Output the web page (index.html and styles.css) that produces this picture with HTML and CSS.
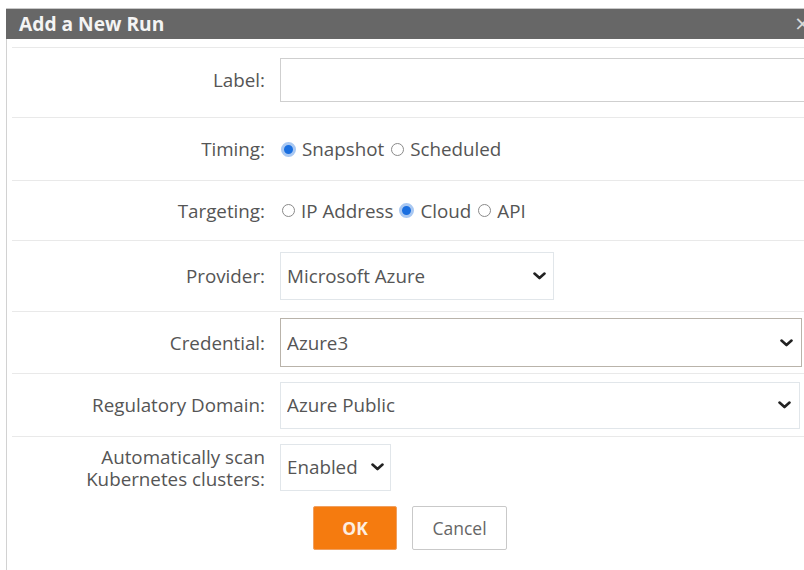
FILE: index.html
```html
<!DOCTYPE html>
<html lang="en">
<head>
<meta charset="utf-8">
<title>Add a New Run</title>
<link rel="stylesheet" href="styles.css">
</head>
<body>
<div class="dialog">
  <div class="titlebar">
    <span class="title">Add a New Run</span>
    <span class="close">&times;</span>
  </div>
  <form class="form">
    <div class="row r-label">
      <label class="lbl" for="run-label">Label:</label>
      <input id="run-label" class="text wide-input" type="text">
    </div>
    <div class="row r-timing">
      <span class="lbl">Timing:</span>
      <div class="radios">
        <label class="opt"><input type="radio" name="timing" checked> Snapshot</label>
        <label class="opt"><input type="radio" name="timing"> Scheduled</label>
      </div>
    </div>
    <div class="row r-target">
      <span class="lbl">Targeting:</span>
      <div class="radios">
        <label class="opt"><input type="radio" name="target"> IP Address</label>
        <label class="opt"><input type="radio" name="target" checked> Cloud</label>
        <label class="opt"><input type="radio" name="target"> API</label>
      </div>
    </div>
    <div class="row r-provider">
      <label class="lbl" for="provider">Provider:</label>
      <select id="provider" class="sel sel-provider"><option>Microsoft Azure</option></select>
    </div>
    <div class="row r-cred">
      <label class="lbl" for="cred">Credential:</label>
      <select id="cred" class="sel sel-full sel-active"><option>Azure3</option></select>
    </div>
    <div class="row r-domain">
      <label class="lbl" for="domain">Regulatory Domain:</label>
      <select id="domain" class="sel sel-domain"><option>Azure Public</option></select>
    </div>
    <div class="row r-kube">
      <label class="lbl lbl-two" for="kube"><span class="line">Automatically scan</span><span class="line">Kubernetes clusters:</span></label>
      <select id="kube" class="sel sel-small"><option>Enabled</option><option>Disabled</option></select>
    </div>
    <div class="actions">
      <button type="button" class="btn btn-ok">OK</button>
      <button type="button" class="btn btn-cancel">Cancel</button>
    </div>
  </form>
</div>
</body>
</html>
```

FILE: styles.css
```css
html, body {
  margin: 0;
  padding: 0;
  background: #ffffff;
  overflow: hidden;
}

body {
  font-family: "Open Sans", "Liberation Sans", sans-serif;
  font-size: 18.8px;
  color: #555555;
  width: 804px;
  height: 570px;
}

.dialog {
  margin: 8px 0 0 6px;
  width: 820px;
  height: 570px;
  border-left: 1px solid #d2d2d2;
  border-top: 1px solid #c8c8c8;
  box-sizing: border-box;
}

.titlebar {
  height: 30px;
  background: #676767;
  display: flex;
  align-items: center;
  padding: 0 0 0 13px;
  margin-left: -1px;
}

.title {
  color: #f4f4f4;
  font-weight: 700;
  font-size: 19.2px;
  line-height: 1;
  flex: 1;
}

/* the close glyph sits at the far right, partly past the viewport */
.close {
  color: #d8d8d8;
  font-size: 26px;
  line-height: 1;
  width: 31px;
  margin-top: -2px;
}

.form {
  padding-top: 8px;
}

.row {
  display: grid;
  grid-template-columns: 253px 1fr;
  column-gap: 15px;
  align-items: center;
  margin-left: 5px;
  border-top: 1px solid #e9e9e9;
}

.r-label    { height: 69px; }
.r-timing   { height: 62px; }
.r-target   { height: 59px; }
.r-provider { height: 70px; }
.r-cred     { height: 61px; }
.r-domain   { height: 62px; }
.r-kube     { height: 62px; }

.lbl {
  text-align: right;
  color: #555555;
  white-space: nowrap;
}

.lbl-two .line {
  display: block;
  line-height: 22px;
  height: 22px;
}

.r-label .lbl {
  position: relative;
  top: -3px;
}

.text {
  height: 44px;
  box-sizing: border-box;
  border: 1px solid #cfcfcf;
  font: inherit;
  padding: 0 6px;
  position: relative;
  top: -3px;
}

.wide-input {
  width: 540px;
}

.radios {
  display: flex;
  align-items: center;
  gap: 5px;
  white-space: nowrap;
}

.opt {
  display: inline-flex;
  align-items: center;
  gap: 6px;
  color: #555555;
}

.opt input {
  appearance: none;
  -webkit-appearance: none;
  margin: 0 0 0 2px;
  width: 13px;
  height: 13px;
  border-radius: 50%;
  border: 1px solid #8a8a8a;
  background: #ffffff;
  box-sizing: border-box;
}

.opt input:checked {
  margin-left: 1px;
  width: 15px;
  height: 15px;
  border: 3px solid #a9c8f2;
  background: #1a6fe0;
  box-shadow: inset 0 0 0 1px #1a6fe0;
}

.sel {
  appearance: none;
  -webkit-appearance: none;
  font: inherit;
  color: #555555;
  background-color: #ffffff;
  background-image: url("data:image/svg+xml,%3Csvg xmlns='http://www.w3.org/2000/svg' width='14' height='8' viewBox='0 0 14 8'%3E%3Cpath d='M1.6 1.4 L7 6.2 L12.4 1.4' fill='none' stroke='%23222' stroke-width='2.8' stroke-linecap='round' stroke-linejoin='round'/%3E%3C/svg%3E");
  background-repeat: no-repeat;
  background-size: 13px 8px;
  border: 1px solid #e1e6ea;
  border-radius: 0;
  padding: 0 30px 0 6px;
  height: 48px;
  box-sizing: border-box;
}

.sel-provider {
  width: 274px;
  background-position: right 7px center;
}

.sel-full {
  width: 522px;
  background-position: right 8px center;
}

.sel-active {
  border-color: #b9b3aa;
  height: 49px;
}

.sel-domain {
  width: 520px;
  height: 47px;
  background-position: right 8px center;
}

.sel-small {
  width: 111px;
  height: 47px;
  background-position: right 6px center;
}

.r-kube .sel-small {
  position: relative;
  top: -1px;
}

.actions {
  display: flex;
  gap: 15px;
  padding: 7px 0 0 306px;
}

.btn {
  font: inherit;
  height: 44px;
  border-radius: 2px;
  cursor: pointer;
}

.btn-ok {
  width: 84px;
  background: #f57b0f;
  border: 1px solid #f0a060;
  color: #fdeee0;
  font-weight: 700;
  font-size: 17.5px;
}

.btn-cancel {
  width: 95px;
  background: #ffffff;
  border: 1px solid #c9c9c9;
  color: #666666;
  font-size: 17.5px;
}
```
